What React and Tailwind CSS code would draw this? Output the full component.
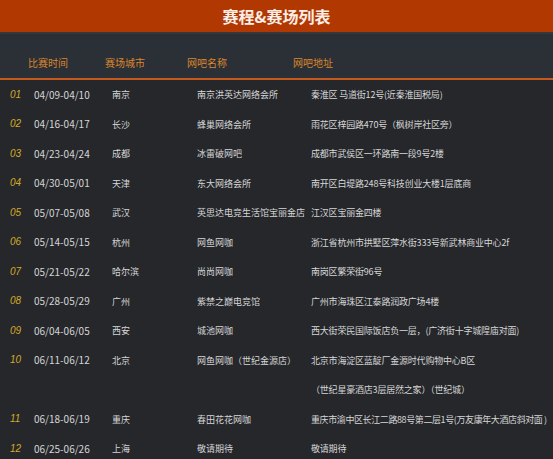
import React from "react";

const rows = [
  ["01", "04/09-04/10", "南京", "南京洪英达网络会所", "秦淮区 马道街12号(近秦淮国税局)"],
  ["02", "04/16-04/17", "长沙", "蜂巢网络会所", "雨花区梓园路470号（枫树岸社区旁）"],
  ["03", "04/23-04/24", "成都", "冰雷破网吧", "成都市武侯区一环路南一段9号2楼"],
  ["04", "04/30-05/01", "天津", "东大网络会所", "南开区白堤路248号科技创业大楼1层底商"],
  ["05", "05/07-05/08", "武汉", "英思达电竞生活馆宝丽金店", "江汉区宝丽金四楼"],
  ["06", "05/14-05/15", "杭州", "网鱼网咖", "浙江省杭州市拱墅区萍水街333号新武林商业中心2f"],
  ["07", "05/21-05/22", "哈尔滨", "尚尚网咖", "南岗区繁荣街96号"],
  ["08", "05/28-05/29", "广州", "紫禁之巅电竞馆", "广州市海珠区江泰路润政广场4楼"],
  ["09", "06/04-06/05", "西安", "城池网咖", "西大街荣民国际饭店负一层，(广济街十字城隍庙对面)"],
  ["10", "06/11-06/12", "北京", "网鱼网咖（世纪金源店）", "北京市海淀区蓝靛厂金源时代购物中心B区"],
  ["", "", "", "", "（世纪星豪酒店3层居然之家）（世纪城）"],
  ["11", "06/18-06/19", "重庆", "春田花花网咖", "重庆市渝中区长江二路88号第二层1号(万友康年大酒店斜对面 )"],
  ["12", "06/25-06/26", "上海", "敬请期待", "敬请期待"],
];

export default function App() {
  return (
    <div
      className="w-[553px] h-[459px] overflow-hidden bg-[#25272b]"
      style={{ fontFamily: '"Noto Sans CJK SC", "Noto Sans", sans-serif' }}
    >
      <div className="h-[32px] bg-[#b23802] flex items-center justify-center text-[#fbeee6] font-bold text-[16px] leading-none pb-[1px]">
        赛程&amp;赛场列表
      </div>
      <div className="h-[2px] bg-[#35373b]" />
      <div className="h-[44px] bg-[#2b2f36] grid grid-cols-[28px_77px_82px_106px_1fr] items-center text-[#d9862c] text-[10px] leading-none pt-[14px]">
        <div />
        <div>比赛时间</div>
        <div>赛场城市</div>
        <div>网吧名称</div>
        <div>网吧地址</div>
      </div>
      <div className="h-[2px] bg-[#c65a1c]" />
      <div className="flex flex-col">
        {rows.map((r, i) => (
          <div
            key={i}
            className="h-[29.5px] grid grid-cols-[34px_78px_85px_114px_1fr] items-center text-[#d6d6d6] text-[9px] leading-none whitespace-nowrap"
          >
            <div className="pl-[10px] italic text-[#d4a928] text-[10px]" style={{ fontFamily: '"Liberation Sans", sans-serif' }}>{r[0]}</div>
            <div className="text-[10px]">{r[1]}</div>
            <div>{r[2]}</div>
            <div>{r[3]}</div>
            <div className={r[0] === "11" ? "tracking-[-0.4px]" : "tracking-[-0.2px]"}>{r[4]}</div>
          </div>
        ))}
      </div>
    </div>
  );
}
